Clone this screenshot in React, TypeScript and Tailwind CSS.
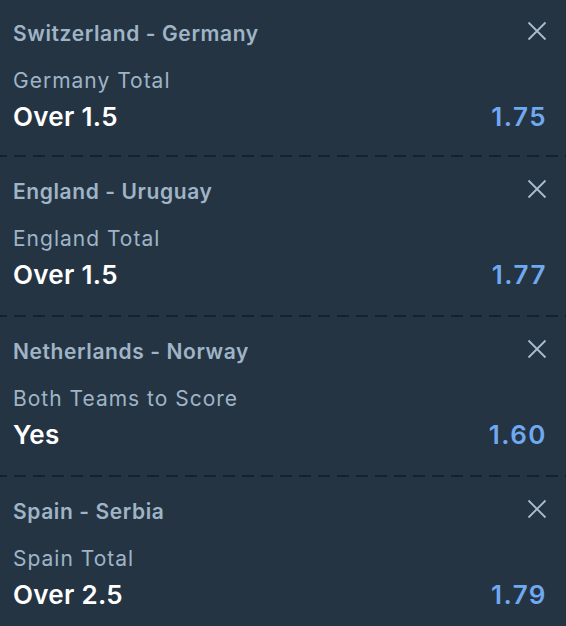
interface Bet {
  match: string
  market: string
  pick: string
  odds: string
}

const bets: Bet[] = [
  { match: 'Switzerland - Germany', market: 'Germany Total', pick: 'Over 1.5', odds: '1.75' },
  { match: 'England - Uruguay', market: 'England Total', pick: 'Over 1.5', odds: '1.77' },
  { match: 'Netherlands - Norway', market: 'Both Teams to Score', pick: 'Yes', odds: '1.60' },
  { match: 'Spain - Serbia', market: 'Spain Total', pick: 'Over 2.5', odds: '1.79' },
]

function Divider() {
  return (
    <div className="h-[2px] w-full bg-[repeating-linear-gradient(90deg,#18212b_0_7px,transparent_7px_14px,#18212b_14px_19px)]" />
  )
}

function CloseIcon() {
  return (
    <svg width="20" height="20" viewBox="0 0 20 20" className="-mt-[1px] -mr-[1px] shrink-0 text-[#a9bdcd]">
      <path d="M1.5 1.5 L18.5 18.5 M18.5 1.5 L1.5 18.5" stroke="currentColor" strokeWidth="1.8" fill="none" />
    </svg>
  )
}

export default function App() {
  return (
    <div className="w-[566px] h-[626px] overflow-hidden bg-[#253442] font-['Inter','Liberation_Sans',sans-serif]">
      {bets.map((bet, i) => (
        <div key={i}>
          {i > 0 && <Divider />}
          <div className={`pl-[13px] pr-5 ${i === 0 ? 'pt-[22px] pb-[23px]' : 'pt-[23px] pb-[25px]'}`}>
            <div className="flex items-start justify-between">
              <span className="text-[21px] leading-6 font-semibold tracking-[0.6px] text-[#9fb4c7]">{bet.match}</span>
              <CloseIcon />
            </div>
            <div className="mt-[23px] text-[21px] leading-6 tracking-[1px] text-[#9fb4c7]">{bet.market}</div>
            <div className="mt-[9px] flex items-center justify-between">
              <span className="text-[26px] leading-[30px] font-semibold tracking-[0.3px] text-white">{bet.pick}</span>
              <span className="text-[26px] leading-[30px] font-semibold tracking-[1.5px] -mr-[1px] text-[#6fa9f1]">{bet.odds}</span>
            </div>
          </div>
        </div>
      ))}
    </div>
  )
}
